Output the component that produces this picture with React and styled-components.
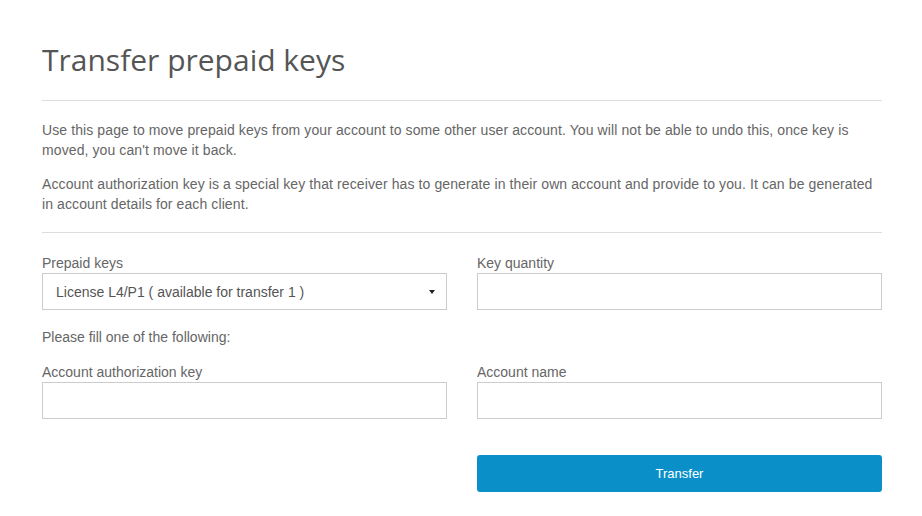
import styled, {createGlobalStyle} from 'styled-components';

const GlobalStyle = createGlobalStyle`
    body {
        margin: 0;
        background: #fff;
        font-family: "Liberation Sans", Arial, sans-serif;
        color: #666;
    }
`;

// Page
const Page = styled.div`
    padding: 38px 40px 24px 42px;
`;

const Title = styled.h1`
    margin: 0;
    font-family: "Open Sans", "Liberation Sans", sans-serif;
    font-weight: 400;
    font-size: 30px;
    line-height: 44px;
    color: #555;
`;

const Rule = styled.hr`
    border: 0;
    border-top: 1px solid #ddd;
    margin: ${(p) => p.$margin || '18px 0 0'};
`;

const Text = styled.p`
    margin: ${(p) => p.$margin || '0'};
    font-size: 14px;
    line-height: 20px;
    letter-spacing: 0.1px;
    color: #666;
`;

// Form
const FormGrid = styled.div`
    display: grid;
    grid-template-columns: 1fr 1fr;
    column-gap: 30px;
    margin-top: 21px;
`;

const Field = styled.label`
    display: flex;
    flex-direction: column;
`;

const Label = styled.span`
    font-size: 14px;
    line-height: 19px;
    color: #666;
`;

const Input = styled.input`
    box-sizing: border-box;
    height: 37px;
    width: 100%;
    border: 1px solid #ccc;
    border-radius: 0;
    padding: 0 13px;
    font: inherit;
    font-size: 14px;
    outline: none;
`;

const SelectBox = styled.div`
    box-sizing: border-box;
    height: 37px;
    border: 1px solid #ccc;
    padding: 0 13px 0 13px;
    display: flex;
    align-items: center;
    justify-content: space-between;
    font-size: 14px;
    color: #555;
`;

const Caret = styled.span`
    width: 0;
    height: 0;
    border-left: 3px solid transparent;
    border-right: 3px solid transparent;
    border-top: 4px solid #222;
    margin-right: -2px;
`;

const Note = styled.div`
    grid-column: 1 / -1;
    font-size: 14px;
    line-height: 20px;
    margin: 17px 0 16px;
`;

const Spacer = styled.div``;

const Button = styled.button`
    margin-top: 36px;
    height: 37px;
    border: 0;
    border-radius: 3px;
    background: #0b8fc9;
    color: #fff;
    font-family: "Liberation Sans", Arial, sans-serif;
    font-size: 13px;
    cursor: pointer;
`;

function App() {
    return (
        <>
            <GlobalStyle />
            <Page>
                <Title>Transfer prepaid keys</Title>
                <Rule />
                <Text $margin="19px 0 0">
                    Use this page to move prepaid keys from your account to some other user account. You will not be able to undo this, once key is moved, you can't move it back.
                </Text>
                <Text $margin="14px 0 0">
                    Account authorization key is a special key that receiver has to generate in their own account and provide to you. It can be generated in account details for each client.
                </Text>
                <Rule $margin="18px 0 0" />
                <FormGrid>
                    <Field>
                        <Label>Prepaid keys</Label>
                        <SelectBox>
                            License L4/P1 ( available for transfer 1 )
                            <Caret />
                        </SelectBox>
                    </Field>
                    <Field>
                        <Label>Key quantity</Label>
                        <Input type="text" />
                    </Field>
                    <Note>Please fill one of the following:</Note>
                    <Field>
                        <Label>Account authorization key</Label>
                        <Input type="text" />
                    </Field>
                    <Field>
                        <Label>Account name</Label>
                        <Input type="text" />
                    </Field>
                    <Spacer />
                    <Button>Transfer</Button>
                </FormGrid>
            </Page>
        </>
    );
}

export default App;
